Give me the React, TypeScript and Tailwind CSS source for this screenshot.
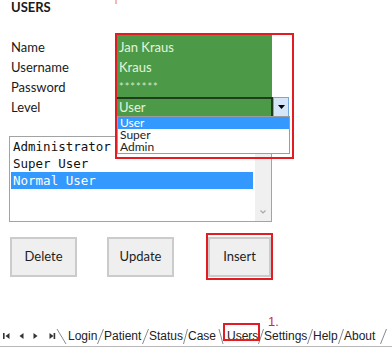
const labels = ['Name', 'Username', 'Password', 'Level'];
const levels = ['User', 'Super', 'Admin'];
const roles = ['Administrator', 'Super User', 'Normal User'];

function Slash({ back = false, w = 6 }: { back?: boolean; w?: number }) {
  return (
    <svg width={w} height={20} className="shrink-0">
      {back ? (
        <line x1={1} y1={3} x2={w - 1} y2={18} stroke="#8a8a8a" strokeWidth={1} />
      ) : (
        <line x1={0.5} y1={18} x2={w - 0.5} y2={3} stroke="#8a8a8a" strokeWidth={1} />
      )}
    </svg>
  );
}

function NavArrows() {
  return (
    <svg width={56} height={20} className="shrink-0" fill="#333">
      <rect x={3} y={7} width={1.6} height={6} />
      <path d="M9.5 7 L5.5 10 L9.5 13 Z" />
      <path d="M23.5 7 L19.5 10 L23.5 13 Z" />
      <path d="M33.5 7 L37.5 10 L33.5 13 Z" />
      <path d="M49.5 7 L53.5 10 L49.5 13 Z" />
      <rect x={53.6} y={7} width={1.6} height={6} />
    </svg>
  );
}

function Button({ children, className = '' }: { children: React.ReactNode; className?: string }) {
  return (
    <div
      className={`flex h-[40px] items-center justify-center border-2 border-[#cbcbcb] bg-[#efefef] text-[13px] text-[#1e1e1e] ${className}`}
    >
      {children}
    </div>
  );
}

export default function App() {
  return (
    <div className="relative h-[348px] w-[392px] overflow-hidden bg-white font-['Lato',sans-serif] text-[#1a1a1a]">
      <div className="absolute left-[115px] top-0 h-[4px] w-[2px] bg-[#f2b8b8]" />
      <h1 className="pl-[11px] text-[13px] font-bold leading-[15px]">USERS</h1>

      <div className="mt-[20px] flex">
        <div className="flex w-[117px] flex-col pl-[11px] pt-[2px] text-[13px] leading-[20px]">
          {labels.map((l) => (
            <span key={l}>{l}</span>
          ))}
        </div>
        <div className="relative w-[173px]">
          <div className="w-[155px] bg-[#4c9a47] pl-[2px] pt-[2px] text-[13px] leading-[20px] text-[#e4f3de]">
            <div>Jan Kraus</div>
            <div>Kraus</div>
            <div className="text-[11px] tracking-[1px] text-[#d2e6ce]">*******</div>
          </div>
          <div className="flex h-[20px]">
            <div className="w-[156px] border-r-2 border-t-2 border-[#1f3d1d] bg-[#4c9a47] pl-[2px] text-[13px] leading-[16px] text-[#e4f3de]">
              User
            </div>
            <div className="flex w-[16px] items-center justify-center border border-[#74a7dc] bg-[#d4e6f8]">
              <svg width={7} height={4}>
                <path d="M0 0 L7 0 L3.5 4 Z" fill="#000" />
              </svg>
            </div>
          </div>

          <div className="absolute left-0 top-[81px] z-10 flex h-[38px] w-[173px] flex-col border border-[#9c9c9c] bg-white text-[12px] leading-[12px] text-[#1e1e1e]">
            {levels.map((v, i) => (
              <div key={v} className={`h-[12px] pl-[2px] ${i === 0 ? 'bg-[#3399ff] text-white' : ''}`}>
                {v}
              </div>
            ))}
          </div>
          <div className="pointer-events-none absolute -left-[2px] -top-[2px] z-20 h-[126px] w-[179px] border-2 border-[#e31b23]" />
        </div>
      </div>

      <div className="ml-[9px] mt-[19px] flex h-[86px] w-[263px] border border-[#a3a3a3] font-['DejaVu_Sans_Mono',monospace] text-[12.5px] leading-[17px]">
        <div className="flex-1 pr-[2px] pl-[1px] pt-[1px]">
          {roles.map((r, i) => (
            <div key={r} className={`pl-[2px] ${i === 2 ? 'bg-[#3399ff] text-white' : 'text-[#111]'}`}>
              {r}
            </div>
          ))}
        </div>
        <div className="flex w-[16px] flex-col justify-end bg-[#f0f0f0] pb-[6px]">
          <svg width={16} height={6}>
            <path d="M5.5 1.5 L8 4 L10.5 1.5" stroke="#a8a8a8" strokeWidth={1.2} fill="none" />
          </svg>
        </div>
      </div>

      <div className="ml-[10px] mt-[15px] flex">
        <Button className="w-[67px]">Delete</Button>
        <Button className="ml-[30px] w-[67px]">Update</Button>
        <div className="relative ml-[34px]">
          <Button className="w-[63px]">Insert</Button>
          <div className="absolute -bottom-[3px] -left-[2px] -right-[2px] -top-[4px] border-2 border-[#e31b23]" />
        </div>
      </div>

      <div className="absolute left-[268px] top-[315px] font-['Liberation_Sans',Arial,sans-serif] text-[13px] leading-[13px] text-[#d42a2a]">
        1.
      </div>

      <div className="mt-[49px] flex h-[21px] items-start border-b border-[#b8b8b8] font-['Liberation_Sans',Arial,sans-serif] text-[12px] leading-[20px] text-[#222]">
        <NavArrows />
        <Slash back w={11} />
        <span className="w-[30px] pl-[1px]">Login</span>
        <Slash w={7} />
        <span className="w-[38px]">Patient</span>
        <Slash w={7} />
        <span className="w-[34px]">Status</span>
        <Slash w={5} />
        <span className="w-[30px]">Case</span>
        <Slash back w={6} />
        <span className="relative w-[34px] pl-[3px]">
          Users
          <span className="absolute -left-[1px] -top-[3px] h-[18px] w-[37px] border-2 border-[#e31b23]" />
        </span>
        <Slash w={6} />
        <span className="w-[43px]">Settings</span>
        <Slash w={6} />
        <span className="w-[25px]">Help</span>
        <Slash w={6} />
        <span className="w-[34px]">About</span>
        <span className="ml-[2px]">
          <Slash w={7} />
        </span>
      </div>
    </div>
  );
}
